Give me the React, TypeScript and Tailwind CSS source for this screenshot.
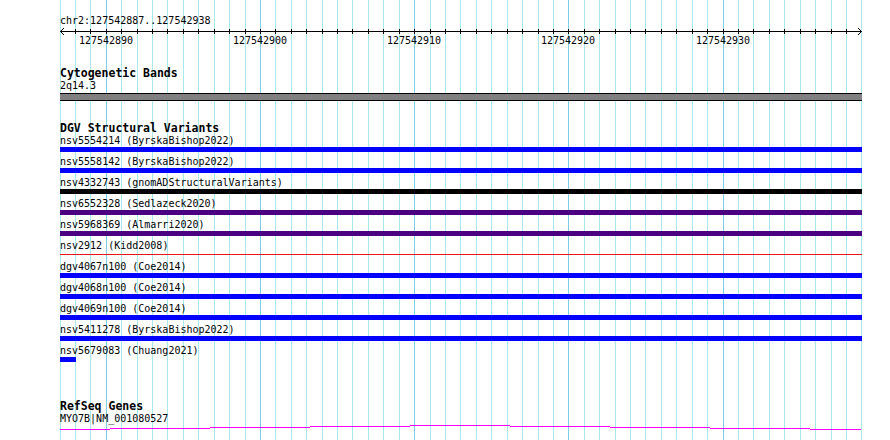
import React from 'react';

const SCALE = 15.42;
const START = 127542887;
const BASES = 52;

const xFor = (i: number) => Math.floor(i * SCALE);

interface Variant {
  name: string;
  study: string;
  color: string;
  kind: 'bar' | 'line' | 'short';
}

const variants: Variant[] = [
  { name: 'nsv5554214', study: 'ByrskaBishop2022', color: 'bg-[#0000ff]', kind: 'bar' },
  { name: 'nsv5558142', study: 'ByrskaBishop2022', color: 'bg-[#0000ff]', kind: 'bar' },
  { name: 'nsv4332743', study: 'gnomADStructuralVariants', color: 'bg-black', kind: 'bar' },
  { name: 'nsv6552328', study: 'Sedlazeck2020', color: 'bg-[#4b0082]', kind: 'bar' },
  { name: 'nsv5968369', study: 'Almarri2020', color: 'bg-[#4b0082]', kind: 'bar' },
  { name: 'nsv2912', study: 'Kidd2008', color: 'bg-[#e8141a]', kind: 'line' },
  { name: 'dgv4067n100', study: 'Coe2014', color: 'bg-[#0000ff]', kind: 'bar' },
  { name: 'dgv4068n100', study: 'Coe2014', color: 'bg-[#0000ff]', kind: 'bar' },
  { name: 'dgv4069n100', study: 'Coe2014', color: 'bg-[#0000ff]', kind: 'bar' },
  { name: 'nsv5411278', study: 'ByrskaBishop2022', color: 'bg-[#0000ff]', kind: 'bar' },
  { name: 'nsv5679083', study: 'Chuang2021', color: 'bg-[#0000ff]', kind: 'short' },
];

// intron line of the gene model, drawn as the canvas staircase
const intron: [number, number, number][] = [
  [0, 50, 4],
  [50, 150, 3],
  [150, 250, 2],
  [250, 350, 1],
  [350, 450, 0],
  [450, 550, 1],
  [550, 650, 2],
  [650, 750, 3],
  [750, 801, 4],
];

function GridLines() {
  const lines = [];
  for (let i = 0; i <= BASES; i++) {
    const major = (START + i) % 10 === 0;
    lines.push(
      <rect key={i} x={60 + xFor(i)} y={0} width={1} height={440} fill={major ? '#7dcfe8' : '#a6e9ef'} />
    );
  }
  return (
    <svg className="absolute inset-0" width={890} height={440} shapeRendering="crispEdges">
      {lines}
    </svg>
  );
}

function Ruler() {
  const ticks = [];
  const labels = [];
  for (let i = 1; i < BASES; i++) {
    ticks.push(<rect key={i} x={xFor(i)} y={2} width={1} height={5} fill="#000" />);
    if ((START + i) % 10 === 0) {
      labels.push(
        <text key={i} x={xFor(i)} y={17} textAnchor="middle" fontSize={10} fill="#000">
          {START + i}
        </text>
      );
    }
  }
  return (
    <svg width={803} height={20} className="block font-['DejaVu_Sans_Mono',monospace]">
      <g shapeRendering="crispEdges">
        <rect x={0} y={4} width={802} height={1} fill="#000" />
        {ticks}
      </g>
      <path d="M4 1 L0.5 4.5 L4 8" fill="none" stroke="#000" strokeWidth={1} />
      <path d="M798 1 L801.5 4.5 L798 8" fill="none" stroke="#000" strokeWidth={1} />
      {labels}
    </svg>
  );
}

function TrackTitle({ children }: { children: React.ReactNode }) {
  return <div className="h-[14px] text-[11.5px] leading-[14px] font-bold">{children}</div>;
}

function Label({ children }: { children: React.ReactNode }) {
  return <div className="h-[12px] text-[10px] leading-[12px] whitespace-nowrap">{children}</div>;
}

function VariantRow({ v }: { v: Variant }) {
  return (
    <div className="flex flex-col">
      <Label>
        {v.name} ({v.study})
      </Label>
      {v.kind === 'bar' && <div className={`h-[5px] w-[802px] ${v.color}`} />}
      {v.kind === 'line' && (
        <div className="h-[5px] w-[802px] pt-[2px]">
          <div className={`h-px w-full ${v.color}`} />
        </div>
      )}
      {v.kind === 'short' && <div className={`h-[5px] w-[16px] ${v.color}`} />}
    </div>
  );
}

export default function App() {
  return (
    <div className="relative w-[890px] h-[440px] overflow-hidden bg-white text-black font-['DejaVu_Sans_Mono',monospace]">
      <GridLines />
      <div className="relative flex flex-col pl-[60px] pt-[15px]">
        <Label>chr2:127542887..127542938</Label>
        <Ruler />

        <section className="mt-[19px] flex flex-col">
          <TrackTitle>Cytogenetic Bands</TrackTitle>
          <Label>2q14.3</Label>
          <div className="mt-px h-[8px] w-[802px] border-y border-black bg-[#808080]" />
        </section>

        <section className="mt-[20px] flex flex-col">
          <TrackTitle>DGV Structural Variants</TrackTitle>
          <div className="flex flex-col gap-[4px]">
            {variants.map((v) => (
              <VariantRow key={v.name} v={v} />
            ))}
          </div>
        </section>

        <section className="mt-[37px] flex flex-col">
          <TrackTitle>RefSeq Genes</TrackTitle>
          <Label>MYO7B|NM_001080527</Label>
          <svg width={802} height={6} className="block" shapeRendering="crispEdges">
            {intron.map(([a, b, y]) => (
              <rect key={a} x={a} y={y} width={b - a} height={1} fill="#ff00ff" />
            ))}
          </svg>
        </section>
      </div>
    </div>
  );
}
